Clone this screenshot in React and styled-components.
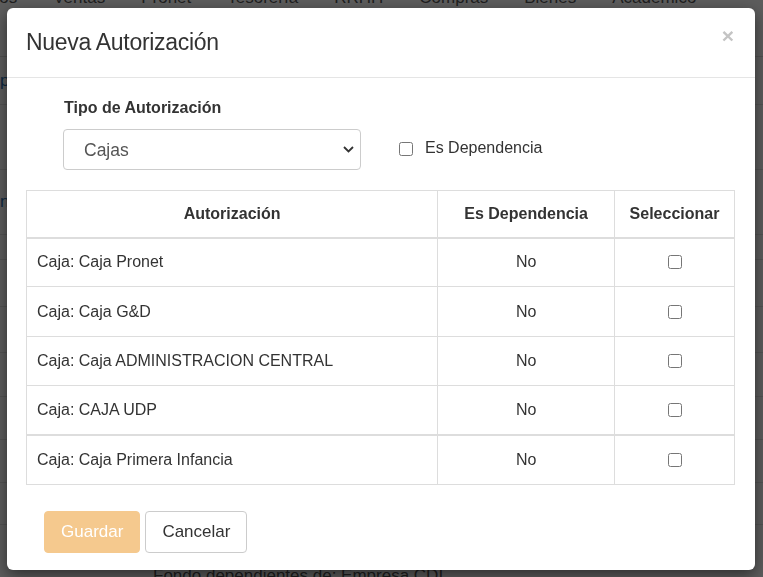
import React from 'react';
import styled, { createGlobalStyle } from 'styled-components';

const GlobalStyle = createGlobalStyle`
  html, body {
    margin: 0;
    padding: 0;
    background: #fff;
    font-family: "Liberation Sans", Arial, sans-serif;
    color: #333;
  }
  * { box-sizing: border-box; }
`;

const Page = styled.div`
  width: 763px;
  height: 577px;
  overflow: hidden;
  background: #fff;
`;

const NavBar = styled.div`
  display: flex;
  gap: 36px;
  margin-top: -12px;
  margin-left: -31px;
  height: 69px;
  border-bottom: 1px solid #ddd;
  font-size: 17px;
  color: #555;
`;

const NavItem = styled.span`
  white-space: nowrap;
`;

const BgRow = styled.div`
  height: ${(p) => p.h || 45}px;
  border-bottom: 1px solid #e4e4e4;
  display: flex;
  align-items: center;
  padding-left: ${(p) => p.indent || 0}px;
  font-size: 17px;
  color: ${(p) => (p.link ? '#2a6fb0' : '#555')};
  white-space: nowrap;
`;

const Backdrop = styled.div`
  position: fixed;
  inset: 0;
  background: rgba(0, 0, 0, 0.64);
`;

const Modal = styled.div`
  position: fixed;
  left: 7px;
  top: 8px;
  width: 748px;
  height: 562px;
  background: #fff;
  border-radius: 6px;
  box-shadow: 0 5px 15px rgba(0, 0, 0, 0.5);
  display: flex;
  flex-direction: column;
`;

const Header = styled.div`
  height: 70px;
  border-bottom: 1px solid #e5e5e5;
  display: flex;
  align-items: center;
  justify-content: space-between;
  padding: 0 21px 0 19px;
`;

const Title = styled.h4`
  margin: 0 0 1px;
  font-size: 23px;
  font-weight: 400;
  color: #333;
  letter-spacing: -0.3px;
`;

const Close = styled.span`
  align-self: flex-start;
  margin-top: 17px;
  font-size: 21px;
  font-weight: 700;
  line-height: 1;
  color: #c4c4c4;
`;

const Body = styled.div`
  padding: 19px 20px 0 19px;
`;

const FormRow = styled.div`
  display: flex;
  align-items: flex-end;
  gap: 38px;
  padding-left: 37px;
`;

const Field = styled.div`
  display: flex;
  flex-direction: column;
`;

const Label = styled.label`
  font-size: 16px;
  font-weight: 700;
  line-height: 22px;
  margin: 0 0 10px 1px;
`;

const SelectWrap = styled.div`
  position: relative;
  width: 298px;
  height: 41px;
`;

const Select = styled.select`
  appearance: none;
  width: 100%;
  height: 100%;
  border: 1px solid #ccc;
  border-radius: 4px;
  background: #fff;
  padding: 0 20px;
  font-family: "Liberation Sans", Arial, sans-serif;
  font-size: 17.5px;
  color: #555;
  outline: none;
`;

const Chevron = styled.svg`
  position: absolute;
  right: 7px;
  top: 17px;
  pointer-events: none;
`;

const CheckGroup = styled.label`
  height: 41px;
  display: flex;
  align-items: center;
  gap: 12px;
  font-size: 16px;
  color: #333;
  padding-bottom: 4px;
`;

const Check = styled.input.attrs({ type: 'checkbox' })`
  width: 14px;
  height: 14px;
  margin: 3px 0 0;
`;

const Table = styled.table`
  width: 709px;
  margin-top: 20px;
  border-collapse: collapse;
  border: 1px solid #ddd;
  font-size: 16px;
  color: #333;
`;

const Th = styled.th`
  border: 1px solid #ddd;
  border-bottom: 2px solid #ddd;
  height: 47px;
  padding: 0 10px;
  font-weight: 700;
  text-align: center;
  width: ${(p) => p.w}px;
`;

const Tr = styled.tr`
  border-top: ${(p) => (p.sep ? '2px' : '1px')} solid #ddd;
`;

const Td = styled.td`
  border-left: 1px solid #ddd;
  border-right: 1px solid #ddd;
  height: 49.4px;
  padding: 0 10px;
  text-align: ${(p) => p.align || 'left'};
  vertical-align: middle;
`;

const CellCheck = styled.input.attrs({ type: 'checkbox' })`
  width: 14px;
  height: 14px;
  margin: 4px 0 0;
`;

const Footer = styled.div`
  display: flex;
  gap: 5px;
  padding: 26px 0 0 37px;
`;

const Button = styled.button`
  height: 42px;
  padding: 0 16px;
  border-radius: 4px;
  font-family: "Liberation Sans", Arial, sans-serif;
  font-size: 17px;
  border: 1px solid ${(p) => (p.primary ? '#f5c98e' : '#ccc')};
  background: ${(p) => (p.primary ? '#f5c98e' : '#fff')};
  color: ${(p) => (p.primary ? '#fff' : '#333')};
`;

const rows = [
  'Caja: Caja Pronet',
  'Caja: Caja G&D',
  'Caja: Caja ADMINISTRACION CENTRAL',
  'Caja: CAJA UDP',
  'Caja: Caja Primera Infancia',
];

const navItems = ['Pagos', 'Ventas', 'Pronet', 'Tesorería', 'RRHH', 'Compras', 'Bienes', 'Académico'];

const bgRows = [
  { h: 48, link: true, text: 'pe' },
  { h: 65 },
  { h: 65, link: true, text: 'n' },
  { h: 25 },
  { h: 47 },
  { h: 46 },
  { h: 44 },
  { h: 43 },
  { h: 43 },
  { h: 42 },
  { h: 102, indent: 153, text: 'Fondo dependientes de: Empresa CDI' },
];

export default function App() {
  return (
    <>
      <GlobalStyle />
      <Page>
        <NavBar>
          {navItems.map((n) => (
            <NavItem key={n}>{n}</NavItem>
          ))}
        </NavBar>
        {bgRows.map((r, i) => (
          <BgRow key={i} h={r.h} link={r.link} indent={r.indent}>
            {r.text}
          </BgRow>
        ))}
      </Page>
      <Backdrop />
      <Modal>
        <Header>
          <Title>Nueva Autorización</Title>
          <Close>×</Close>
        </Header>
        <Body>
          <FormRow>
            <Field>
              <Label>Tipo de Autorización</Label>
              <SelectWrap>
                <Select defaultValue="cajas">
                  <option value="cajas">Cajas</option>
                </Select>
                <Chevron width="11" height="7" viewBox="0 0 11 7">
                  <path d="M1 1l4.5 4.5L10 1" fill="none" stroke="#333" strokeWidth="1.8" />
                </Chevron>
              </SelectWrap>
            </Field>
            <CheckGroup>
              <Check />
              Es Dependencia
            </CheckGroup>
          </FormRow>
          <Table>
            <thead>
              <tr>
                <Th w={412}>Autorización</Th>
                <Th w={177}>Es Dependencia</Th>
                <Th w={120}>Seleccionar</Th>
              </tr>
            </thead>
            <tbody>
              {rows.map((r, i) => (
                <Tr key={r} sep={i === 4}>
                  <Td>{r}</Td>
                  <Td align="center">No</Td>
                  <Td align="center">
                    <CellCheck />
                  </Td>
                </Tr>
              ))}
            </tbody>
          </Table>
        </Body>
        <Footer>
          <Button primary disabled>Guardar</Button>
          <Button>Cancelar</Button>
        </Footer>
      </Modal>
    </>
  );
}
